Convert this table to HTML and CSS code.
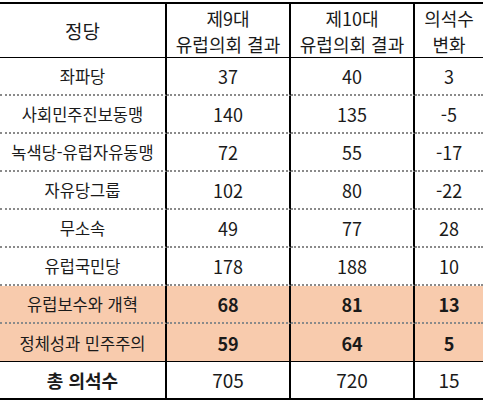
FILE: index.html
```html
<!DOCTYPE html>
<html lang="ko">
<head>
<meta charset="utf-8">
<link rel="stylesheet" href="styles.css">
</head>
<body>
<div class="table">
  <div class="cell head big">정당</div>
  <div class="cell head">제9대<br>유럽의회 결과</div>
  <div class="cell head">제10대<br>유럽의회 결과</div>
  <div class="cell head last">의석수<br>변화</div>

  <div class="cell">좌파당</div><div class="cell n">37</div><div class="cell n">40</div><div class="cell n last">3</div>
  <div class="cell">사회민주진보동맹</div><div class="cell n">140</div><div class="cell n">135</div><div class="cell n last">-5</div>
  <div class="cell">녹색당-유럽자유동맹</div><div class="cell n">72</div><div class="cell n">55</div><div class="cell n last">-17</div>
  <div class="cell">자유당그룹</div><div class="cell n">102</div><div class="cell n">80</div><div class="cell n last">-22</div>
  <div class="cell">무소속</div><div class="cell n">49</div><div class="cell n">77</div><div class="cell n last">28</div>
  <div class="cell">유럽국민당</div><div class="cell n">178</div><div class="cell n">188</div><div class="cell n last">10</div>
  <div class="cell hl">유럽보수와 개혁</div><div class="cell hl n b">68</div><div class="cell hl n b">81</div><div class="cell hl n b last">13</div>
  <div class="cell hl end">정체성과 민주주의</div><div class="cell hl n b end">59</div><div class="cell hl n b end">64</div><div class="cell hl n b end last">5</div>

  <div class="cell total name">총 의석수</div><div class="cell total n">705</div><div class="cell total n">720</div><div class="cell total n last">15</div>
</div>
</body>
</html>
```

FILE: styles.css
```css
html, body {
  margin: 0;
  padding: 0;
  background: #fff;
}
body {
  font-family: "Noto Sans CJK KR", "Noto Sans", sans-serif;
  color: #1a1a1a;
}
.table {
  width: 483px;
  padding-top: 2px;
  display: grid;
  grid-template-columns: 167px 124px 124px 68px;
}
.cell {
  box-sizing: border-box;
  height: 38px;
  border-right: 2px solid #000;
  border-bottom: 2px dotted #8a8a8a;
  display: flex;
  align-items: center;
  justify-content: center;
  font-size: 16.5px;
  line-height: 20px;
  text-align: center;
  white-space: nowrap;
}
.cell.n {
  font-size: 18px;
}
.cell.last {
  border-right: none;
}
.head {
  height: 56px;
  border-top: 2px solid #000;
  border-bottom: 1px solid #000;
  font-size: 18px;
  line-height: 26px;
  padding-top: 1px;
}
.head.big {
  font-size: 19px;
}
.hl {
  background: #f8cbad;
}
.b {
  font-weight: 700;
}
.end {
  border-bottom: 1px solid #000;
}
.total {
  border-bottom: 2px solid #000;
  height: 38px;
}
.total.name {
  font-size: 18px;
  font-weight: 700;
}
.total.n {
  font-size: 19px;
}
```
